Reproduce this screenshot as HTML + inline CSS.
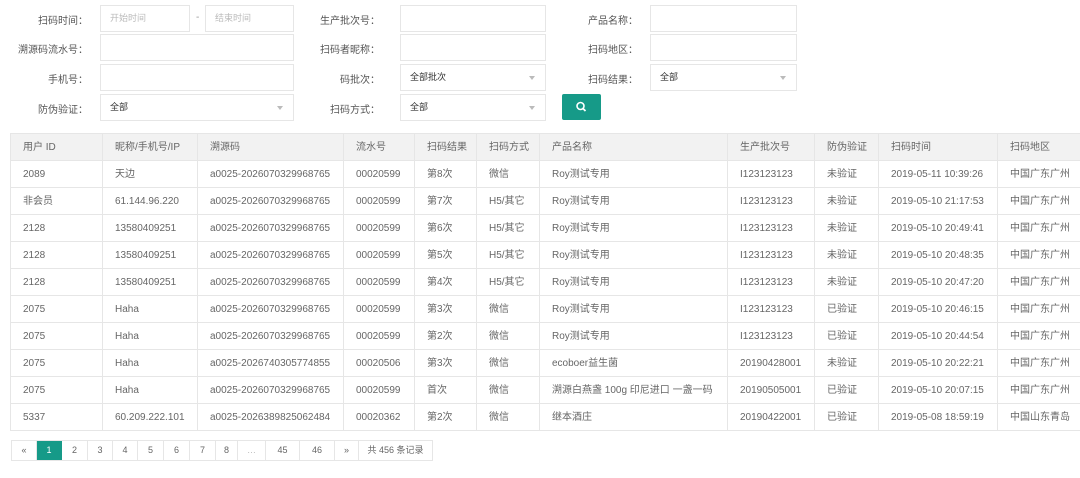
<!DOCTYPE html><html><head><meta charset="utf-8"><style>
*{box-sizing:border-box;margin:0;padding:0}
body{width:1080px;height:478px;overflow:hidden;background:#fff;font-family:"Liberation Sans","Noto Sans CJK SC",sans-serif;font-size:10px;color:#555;position:relative}
.l{position:absolute;text-align:right;color:#555;font-size:10px;line-height:12px}
.i{position:absolute;border:1px solid #e6e6e6;background:#fff;height:27px;color:#bbb;padding-left:9px;line-height:25px;font-size:9px}
.i.s{color:#333}
.i.s:after{content:"";position:absolute;right:10px;top:11px;border:3px solid transparent;border-top:4px solid #bbb}
table{position:absolute;left:10px;top:133px;border-collapse:collapse;width:1080px;table-layout:fixed}
td{border:1px solid #e6e6e6;height:27px;line-height:25px;padding:0 0 0 12px;color:#666;white-space:nowrap;font-size:10px;overflow:hidden;vertical-align:middle}
tr:first-child td{background:#f2f2f2;color:#666}
.pg{position:absolute;left:11px;top:440px;display:flex;height:21px;border:1px solid #e6e6e6}
.pg span{border-right:1px solid #e6e6e6;text-align:center;line-height:19px;font-size:9px;color:#666}
</style></head><body>
<div class="l" style="left:0;width:88px;top:16px">扫码时间：</div>
<div class="i" style="left:100px;top:5px;width:90px">开始时间</div>
<div style="position:absolute;left:196px;top:12px;color:#999">-</div>
<div class="i" style="left:205px;top:5px;width:89px">结束时间</div>
<div class="l" style="left:0;width:88px;top:45px">溯源码流水号：</div>
<div class="i" style="left:100px;top:34px;width:194px"></div>
<div class="l" style="left:0;width:88px;top:75px">手机号：</div>
<div class="i" style="left:100px;top:64px;width:194px"></div>
<div class="l" style="left:0;width:88px;top:105px">防伪验证：</div>
<div class="i s" style="left:100px;top:94px;width:194px">全部</div>

<div class="l" style="left:300px;width:80px;top:16px">生产批次号：</div>
<div class="i" style="left:400px;top:5px;width:146px"></div>
<div class="l" style="left:300px;width:80px;top:45px">扫码者昵称：</div>
<div class="i" style="left:400px;top:34px;width:146px"></div>
<div class="l" style="left:300px;width:80px;top:75px">码批次：</div>
<div class="i s" style="left:400px;top:64px;width:146px">全部批次</div>
<div class="l" style="left:300px;width:80px;top:105px">扫码方式：</div>
<div class="i s" style="left:400px;top:94px;width:146px">全部</div>

<div class="l" style="left:560px;width:78px;top:16px">产品名称：</div>
<div class="i" style="left:650px;top:5px;width:147px"></div>
<div class="l" style="left:560px;width:78px;top:45px">扫码地区：</div>
<div class="i" style="left:650px;top:34px;width:147px"></div>
<div class="l" style="left:560px;width:78px;top:75px">扫码结果：</div>
<div class="i s" style="left:650px;top:64px;width:147px">全部</div>
<div style="position:absolute;left:562px;top:94px;width:39px;height:26px;background:#169a88;border-radius:2px">
<svg width="39" height="26"><circle cx="18.5" cy="12" r="3.5" fill="none" stroke="#fff" stroke-width="1.6"/><line x1="21" y1="14.5" x2="23.5" y2="17" stroke="#fff" stroke-width="1.8"/></svg></div>

<table>
<colgroup><col style="width:92px"><col style="width:95px"><col style="width:146px"><col style="width:71px"><col style="width:62px"><col style="width:63px"><col style="width:188px"><col style="width:87px"><col style="width:64px"><col style="width:119px"><col style="width:93px"></colgroup>
<tr><td>用户 ID</td><td>昵称/手机号/IP</td><td>溯源码</td><td>流水号</td><td>扫码结果</td><td>扫码方式</td><td>产品名称</td><td>生产批次号</td><td>防伪验证</td><td>扫码时间</td><td>扫码地区</td></tr>
<tr><td>2089</td><td>天边</td><td>a0025-2026070329968765</td><td>00020599</td><td>第8次</td><td>微信</td><td>Roy测试专用</td><td>I123123123</td><td>未验证</td><td>2019-05-11 10:39:26</td><td>中国广东广州</td></tr>
<tr><td>非会员</td><td>61.144.96.220</td><td>a0025-2026070329968765</td><td>00020599</td><td>第7次</td><td>H5/其它</td><td>Roy测试专用</td><td>I123123123</td><td>未验证</td><td>2019-05-10 21:17:53</td><td>中国广东广州</td></tr>
<tr><td>2128</td><td>13580409251</td><td>a0025-2026070329968765</td><td>00020599</td><td>第6次</td><td>H5/其它</td><td>Roy测试专用</td><td>I123123123</td><td>未验证</td><td>2019-05-10 20:49:41</td><td>中国广东广州</td></tr>
<tr><td>2128</td><td>13580409251</td><td>a0025-2026070329968765</td><td>00020599</td><td>第5次</td><td>H5/其它</td><td>Roy测试专用</td><td>I123123123</td><td>未验证</td><td>2019-05-10 20:48:35</td><td>中国广东广州</td></tr>
<tr><td>2128</td><td>13580409251</td><td>a0025-2026070329968765</td><td>00020599</td><td>第4次</td><td>H5/其它</td><td>Roy测试专用</td><td>I123123123</td><td>未验证</td><td>2019-05-10 20:47:20</td><td>中国广东广州</td></tr>
<tr><td>2075</td><td>Haha</td><td>a0025-2026070329968765</td><td>00020599</td><td>第3次</td><td>微信</td><td>Roy测试专用</td><td>I123123123</td><td>已验证</td><td>2019-05-10 20:46:15</td><td>中国广东广州</td></tr>
<tr><td>2075</td><td>Haha</td><td>a0025-2026070329968765</td><td>00020599</td><td>第2次</td><td>微信</td><td>Roy测试专用</td><td>I123123123</td><td>已验证</td><td>2019-05-10 20:44:54</td><td>中国广东广州</td></tr>
<tr><td>2075</td><td>Haha</td><td>a0025-2026740305774855</td><td>00020506</td><td>第3次</td><td>微信</td><td>ecoboer益生菌</td><td>20190428001</td><td>未验证</td><td>2019-05-10 20:22:21</td><td>中国广东广州</td></tr>
<tr><td>2075</td><td>Haha</td><td>a0025-2026070329968765</td><td>00020599</td><td>首次</td><td>微信</td><td>溯源白燕盏 100g 印尼进口 一盏一码</td><td>20190505001</td><td>已验证</td><td>2019-05-10 20:07:15</td><td>中国广东广州</td></tr>
<tr><td>5337</td><td>60.209.222.101</td><td>a0025-2026389825062484</td><td>00020362</td><td>第2次</td><td>微信</td><td>继本酒庄</td><td>20190422001</td><td>已验证</td><td>2019-05-08 18:59:19</td><td>中国山东青岛</td></tr>
</table>
<div class="pg">
<span style="width:25px">«</span><span style="width:25px;background:#169a88;color:#fff;border-color:#169a88">1</span><span style="width:26px">2</span><span style="width:25px">3</span><span style="width:25px">4</span><span style="width:26px">5</span><span style="width:26px">6</span><span style="width:26px">7</span><span style="width:22px">8</span><span style="width:28px;color:#bbb">…</span><span style="width:34px">45</span><span style="width:35px">46</span><span style="width:24px">»</span><span style="width:73px;border-right:none">共 456 条记录</span>
</div>
</body></html>
